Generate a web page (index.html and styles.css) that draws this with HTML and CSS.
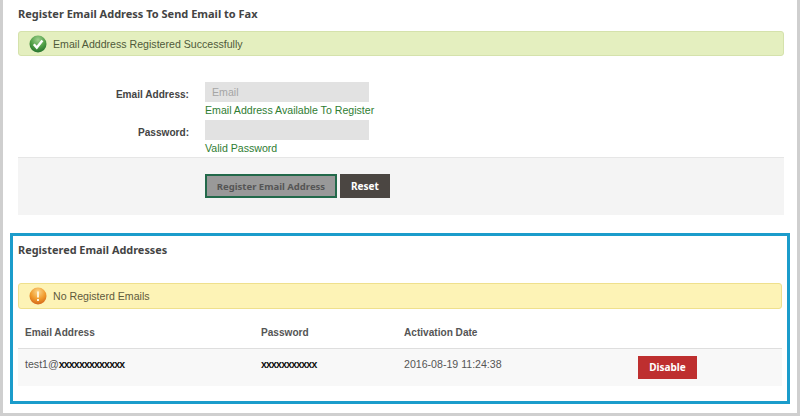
FILE: index.html
```html
<!DOCTYPE html>
<html lang="en">
<head>
    <meta charset="UTF-8">
    <title>Register Email Address</title>
    <link rel="stylesheet" href="styles.css">
</head>
<body>
    <div class="page">
        <div class="register-section">
            <h2 class="section-title">Register Email Address To Send Email to Fax</h2>
            <div class="alert alert-success">
                <svg class="alert-icon" viewBox="0 0 18 18">
                    <defs>
                        <radialGradient id="greenBall" cx="50%" cy="25%" r="80%">
                            <stop offset="0" stop-color="#9fd08f"/>
                            <stop offset="0.55" stop-color="#4f9e45"/>
                            <stop offset="1" stop-color="#1f6b2a"/>
                        </radialGradient>
                    </defs>
                    <circle cx="9" cy="9" r="8.5" fill="url(#greenBall)"/>
                    <path d="M4.8 9.2 L7.8 12.6 L13.4 5.6" fill="none" stroke="#fff" stroke-width="2.4"/>
                </svg>
                <span>Email Adddress Registered Successfully</span>
            </div>
            <div class="form-row form-row-first">
                <label class="form-label">Email Address:</label>
                <div class="form-field">
                    <input class="form-input" type="text" placeholder="Email">
                    <div class="form-hint">Email Address Available To Register</div>
                </div>
            </div>
            <div class="form-row">
                <label class="form-label">Password:</label>
                <div class="form-field">
                    <input class="form-input" type="password">
                    <div class="form-hint">Valid Password</div>
                </div>
            </div>
            <div class="form-actions">
                <button class="btn btn-register">Register Email Address</button>
                <button class="btn btn-reset">Reset</button>
            </div>
        </div>

        <div class="registered-section">
            <h2 class="section-title">Registered Email Addresses</h2>
            <div class="alert alert-warning">
                <svg class="alert-icon" viewBox="0 0 18 18">
                    <defs>
                        <radialGradient id="orangeBall" cx="50%" cy="25%" r="80%">
                            <stop offset="0" stop-color="#fbd58a"/>
                            <stop offset="0.55" stop-color="#f09a2c"/>
                            <stop offset="1" stop-color="#cf5f17"/>
                        </radialGradient>
                    </defs>
                    <circle cx="9" cy="9" r="8.5" fill="url(#orangeBall)"/>
                    <path d="M9 4.5 V10.5 M9 12 V14" fill="none" stroke="#fff3d6" stroke-width="2"/>
                </svg>
                <span>No Registerd Emails</span>
            </div>
            <table class="email-table">
                <thead>
                    <tr>
                        <th class="col-email">Email Address</th>
                        <th class="col-password">Password</th>
                        <th class="col-date">Activation Date</th>
                        <th></th>
                    </tr>
                </thead>
                <tbody>
                    <tr>
                        <td>test1@<span class="scrubbed">xxxxxxxxxxxxx</span></td>
                        <td><span class="scrubbed">xxxxxxxxxxx</span></td>
                        <td>2016-08-19 11:24:38</td>
                        <td><button class="btn btn-disable">Disable</button></td>
                    </tr>
                </tbody>
            </table>
        </div>
    </div>
</body>
</html>
```

FILE: styles.css
```css
* {
    margin: 0;
    padding: 0;
    box-sizing: border-box;
}
body {
    font-family: "Liberation Sans", Arial, sans-serif;
    font-size: 10.6px;
    color: #555;
    background: #cfcfcf;
    width: 800px;
    height: 416px;
    padding: 0 3px 3px;
    overflow: hidden;
}
.page {
    background: #fff;
    height: 413px;
    padding-top: 6px;
}
.register-section {
    padding: 0 13px 0 15px;
}
.section-title {
    font-family: "Noto Sans", sans-serif;
    font-size: 11px;
    font-weight: 700;
    line-height: 16px;
    color: #444;
}
.registered-section .section-title {
    font-size: 10.9px;
}
.alert {
    display: flex;
    align-items: center;
    height: 26px;
    padding-left: 10px;
    border-radius: 3px;
    font-size: 10.6px;
}
.alert-icon {
    width: 18px;
    height: 18px;
    margin-right: 6px;
}
.alert-success {
    height: 25px;
    margin-top: 9px;
    background: #e4efbf;
    border: 1px solid #d5e2ac;
    color: #4f5a3a;
}
.alert-warning {
    margin-top: 25px;
    background: #fdf3b6;
    border: 1px solid #efe08d;
    color: #5f5a3c;
}
.form-row {
    display: flex;
    margin-top: 3px;
}
.form-row-first {
    margin-top: 26px;
}
.form-label {
    width: 171px;
    padding-top: 7px;
    text-align: right;
    font-weight: 700;
    font-size: 10.1px;
    color: #444;
}
.form-field {
    margin-left: 16px;
}
.form-input {
    display: block;
    width: 164px;
    height: 20px;
    padding: 0 7px;
    border: none;
    background: #e2e2e2;
    font-family: "Liberation Sans", Arial, sans-serif;
    font-size: 10.6px;
}
.form-input::placeholder {
    color: #a5a5a5;
}
.form-hint {
    margin-top: 1px;
    line-height: 14px;
    color: #2f7d32;
    font-size: 10.6px;
}
.form-actions {
    display: flex;
    gap: 3px;
    height: 58px;
    margin-top: 2px;
    padding: 16px 0 0 187px;
    background: #f4f4f4;
    border-top: 1px solid #e6e6e6;
}
.btn {
    font-family: "Noto Sans", sans-serif;
    font-size: 10px;
    font-weight: 700;
    height: 24px;
    border: none;
    color: #fff;
}
.btn-register {
    width: 132px;
    background: #999;
    border: 2px solid #22694a;
    color: #555;
    font-size: 9.5px;
}
.btn-reset {
    width: 50px;
    background: #4b4642;
}
.btn-disable {
    display: block;
    width: 59px;
    height: 23px;
    background: #be2f2f;
}
.registered-section {
    margin: 18px 7px 0;
    height: 171px;
    padding: 6px 5px 0;
    border: 3px solid #1b9ccb;
}
.email-table {
    width: 100%;
    border-collapse: collapse;
    table-layout: fixed;
}
.email-table th {
    height: 39px;
    padding: 8px 0 0 7px;
    text-align: left;
    font-size: 10.1px;
    font-weight: 700;
    color: #555;
    border-bottom: 1px solid #dedede;
}
.email-table td {
    height: 38px;
    padding: 0 0 6px 7px;
    background: #f8f8f8;
    font-size: 10.6px;
    color: #555;
}
.email-table td:last-child {
    padding: 0 0 0 4px;
}
.col-email {
    width: 236px;
}
.col-password {
    width: 143px;
}
.col-date {
    width: 237px;
}
.scrubbed {
    color: #111;
    letter-spacing: -0.8px;
    font-weight: 700;
    font-size: 10.5px;
}
```
